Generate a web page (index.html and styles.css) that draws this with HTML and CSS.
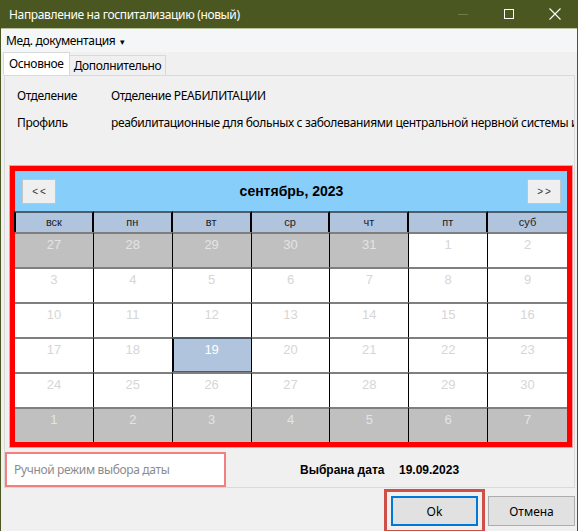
FILE: index.html
```html
<!DOCTYPE html>
<html lang="ru">
<head>
<meta charset="utf-8">
<title>Направление на госпитализацию (новый)</title>
<link rel="stylesheet" href="styles.css">
</head>
<body>
<div class="window">
  <div class="titlebar">
    <span class="title">Направление на госпитализацию (новый)</span>
    <div class="controls">
      <span class="ctl min"><svg width="12" height="12" viewBox="0 0 12 12"><path d="M1 6.5H11" stroke="#6f7d4a" stroke-width="1"/></svg></span>
      <span class="ctl"><svg width="12" height="12" viewBox="0 0 12 12"><rect x="1.5" y="1.5" width="9" height="9" fill="none" stroke="#ffffff" stroke-width="1"/></svg></span>
      <span class="ctl"><svg width="12" height="12" viewBox="0 0 12 12"><path d="M0.5 0.5L11.5 11.5M11.5 0.5L0.5 11.5" stroke="#ffffff" stroke-width="1.1"/></svg></span>
    </div>
  </div>
  <div class="menubar">
    <span class="menu">Мед. документация <span class="caret">▾</span></span>
  </div>
  <div class="tabs">
    <span class="tab active">Основное</span>
    <span class="tab">Дополнительно</span>
  </div>
  <div class="panel">
    <div class="info">
      <div class="info-row"><span class="lbl">Отделение</span><span class="val">Отделение РЕАБИЛИТАЦИИ</span></div>
      <div class="info-row"><span class="lbl">Профиль</span><span class="val">реабилитационные для больных с заболеваниями центральной нервной системы и</span></div>
    </div>
    <div class="calendar">
      <div class="cal-head">
        <button class="nav">&lt;&lt;</button>
        <span class="month">сентябрь, 2023</span>
        <button class="nav">&gt;&gt;</button>
      </div>
      <div class="grid">
        <div class="dn">вск</div><div class="dn">пн</div><div class="dn">вт</div><div class="dn">ср</div><div class="dn">чт</div><div class="dn">пт</div><div class="dn">суб</div>
        <div class="d other">27</div><div class="d other">28</div><div class="d other">29</div><div class="d other">30</div><div class="d other">31</div><div class="d">1</div><div class="d">2</div>
        <div class="d">3</div><div class="d">4</div><div class="d">5</div><div class="d">6</div><div class="d">7</div><div class="d">8</div><div class="d">9</div>
        <div class="d">10</div><div class="d">11</div><div class="d">12</div><div class="d">13</div><div class="d">14</div><div class="d">15</div><div class="d">16</div>
        <div class="d">17</div><div class="d">18</div><div class="d sel">19</div><div class="d">20</div><div class="d">21</div><div class="d">22</div><div class="d">23</div>
        <div class="d">24</div><div class="d">25</div><div class="d">26</div><div class="d">27</div><div class="d">28</div><div class="d">29</div><div class="d">30</div>
        <div class="d other">1</div><div class="d other">2</div><div class="d other">3</div><div class="d other">4</div><div class="d other">5</div><div class="d other">6</div><div class="d other">7</div>
      </div>
    </div>
    <div class="bottom">
      <div class="field">Ручной режим выбора даты</div>
      <span class="chosen-lbl">Выбрана дата</span>
      <span class="chosen-val">19.09.2023</span>
    </div>
  </div>
  <div class="buttons">
    <button class="btn ok">Ok</button>
    <button class="btn">Отмена</button>
  </div>
</div>
</body>
</html>
```
FILE: styles.css
```css
html, body {
  margin: 0;
  padding: 0;
  background: #f0f0f0;
}
.window {
  width: 578px;
  height: 531px;
  box-sizing: border-box;
  border-left: 1px solid #4a5720;
  border-right: 1px solid #4a5720;
  background: #f0f0f0;
  font-family: "Noto Sans", "Open Sans", sans-serif;
  font-size: 12px;
  letter-spacing: -0.35px;
  color: #000;
  overflow: hidden;
}
.titlebar {
  height: 28px;
  background: #4a5720;
  display: flex;
  align-items: center;
  justify-content: space-between;
  margin: 0 -1px;
  border-bottom: 1px solid #b9c19d;
}
.title {
  color: #ffffff;
  padding-left: 9px;
  font-size: 12px;
}
.controls {
  display: flex;
  height: 28px;
}
.ctl {
  width: 46px;
  display: flex;
  align-items: center;
  justify-content: center;
}
.menubar {
  height: 23px;
  display: flex;
  align-items: center;
  background: #f5f6f7;
}
.menu {
  padding-left: 5px;
}
.caret {
  font-size: 9px;
  margin-left: 2px;
}
.tabs {
  height: 23px;
  display: flex;
  align-items: flex-end;
  padding-left: 2px;
}
.tab {
  height: 20px;
  line-height: 19px;
  padding: 0 4px;
  border: 1px solid #d9d9d9;
  border-bottom: none;
  background: #f0f0f0;
  box-sizing: border-box;
}
.tab.active {
  height: 23px;
  line-height: 22px;
  background: #ffffff;
  border-color: #d9d9d9;
  padding: 0 5px;
  margin-right: -1px;
  position: relative;
  z-index: 1;
}
.panel {
  margin: 0 2px 0 3px;
  height: 413px;
  box-sizing: border-box;
  border: 1px solid #d9d9d9;
  background: #f0f0f0;
  display: flex;
  flex-direction: column;
}
.info {
  padding-top: 9px;
  display: flex;
  flex-direction: column;
  gap: 7px;
}
.info-row {
  display: flex;
  height: 20px;
  align-items: center;
  white-space: nowrap;
  overflow: hidden;
}
.lbl {
  width: 94px;
  padding-left: 12px;
  flex: none;
}
.calendar {
  margin: 34px 0 0 5px;
  width: 562px;
  box-sizing: border-box;
  border: 5px solid #ff0000;
  box-shadow: 0 0 0 1px #ff9a9a;
  font-family: "Liberation Sans", Arial, sans-serif;
  letter-spacing: 0;
}
.cal-head {
  height: 40px;
  background: #87cefa;
  display: flex;
  align-items: center;
  justify-content: space-between;
  padding: 0 6px 0 7px;
}
.nav {
  width: 34px;
  height: 25px;
  border: 1px solid #c4c4c4;
  background: #efefef;
  font-family: "Liberation Sans", Arial, sans-serif;
  font-size: 10px;
  letter-spacing: 2px;
  color: #333;
  padding: 0 0 0 2px;
  margin: 0;
}
.month {
  font-weight: bold;
  font-size: 14px;
}
.grid {
  display: grid;
  grid-template-columns: repeat(7, 1fr);
}
.dn {
  height: 19px;
  background: #b0c4de;
  border-top: 2px solid #4e5d6c;
  border-right: 2px solid #000;
  font-size: 11px;
  color: #222;
  text-align: center;
  line-height: 19px;
}
.dn:nth-child(7n) {
  border-right: none;
}
.dn:first-child {
  border-left: 2px solid #000;
  margin-left: -1px;
}
.d {
  background: #ffffff;
  border-top: 2px solid #7f7f7f;
  border-right: 1px solid #000;
  font-size: 13px;
  color: #d6d6d6;
  text-align: center;
  line-height: 17px;
  padding-top: 2px;
  height: 31px;
}
.d:nth-child(7n) {
  border-right: none;
}
.d.other {
  background: #c0c0c0;
  color: #e4e4e4;
}
.d.sel {
  background: #b0c4de;
  color: #ffffff;
  border-top-color: #4e5d6c;
  box-shadow: inset 0 -1px 0 #4e5d6c, inset 1px 0 0 #000;
}
.grid .d:nth-child(n+43) {
  height: 31px;
}
.bottom {
  margin-top: 5px;
  display: flex;
  align-items: center;
  flex: 1;
}
.field {
  width: 221px;
  height: 35px;
  box-sizing: border-box;
  border: 2px solid #f37f7f;
  background: #ffffff;
  color: #8c8c8c;
  line-height: 31px;
  padding-left: 7px;
  align-self: flex-end;
}
.chosen-lbl {
  margin-left: 74px;
  font-family: "Liberation Sans", Arial, sans-serif;
  letter-spacing: 0;
  font-weight: bold;
  width: 99px;
}
.chosen-val {
  font-family: "Liberation Sans", Arial, sans-serif;
  letter-spacing: 0;
  font-weight: bold;
}
.buttons {
  display: flex;
  justify-content: flex-end;
  gap: 10px;
  padding: 8px 2px 0 0;
}
.btn {
  width: 87px;
  height: 30px;
  box-sizing: border-box;
  background: #e1e1e1;
  border: 1px solid #adadad;
  font-family: "Noto Sans", "Open Sans", sans-serif;
  font-size: 12px;
  color: #000;
  margin: 0;
  padding: 0;
}
.btn.ok {
  border: 2px solid #0078d7;
  outline: 3px solid #cd4f47;
  outline-offset: 4px;
}
```
